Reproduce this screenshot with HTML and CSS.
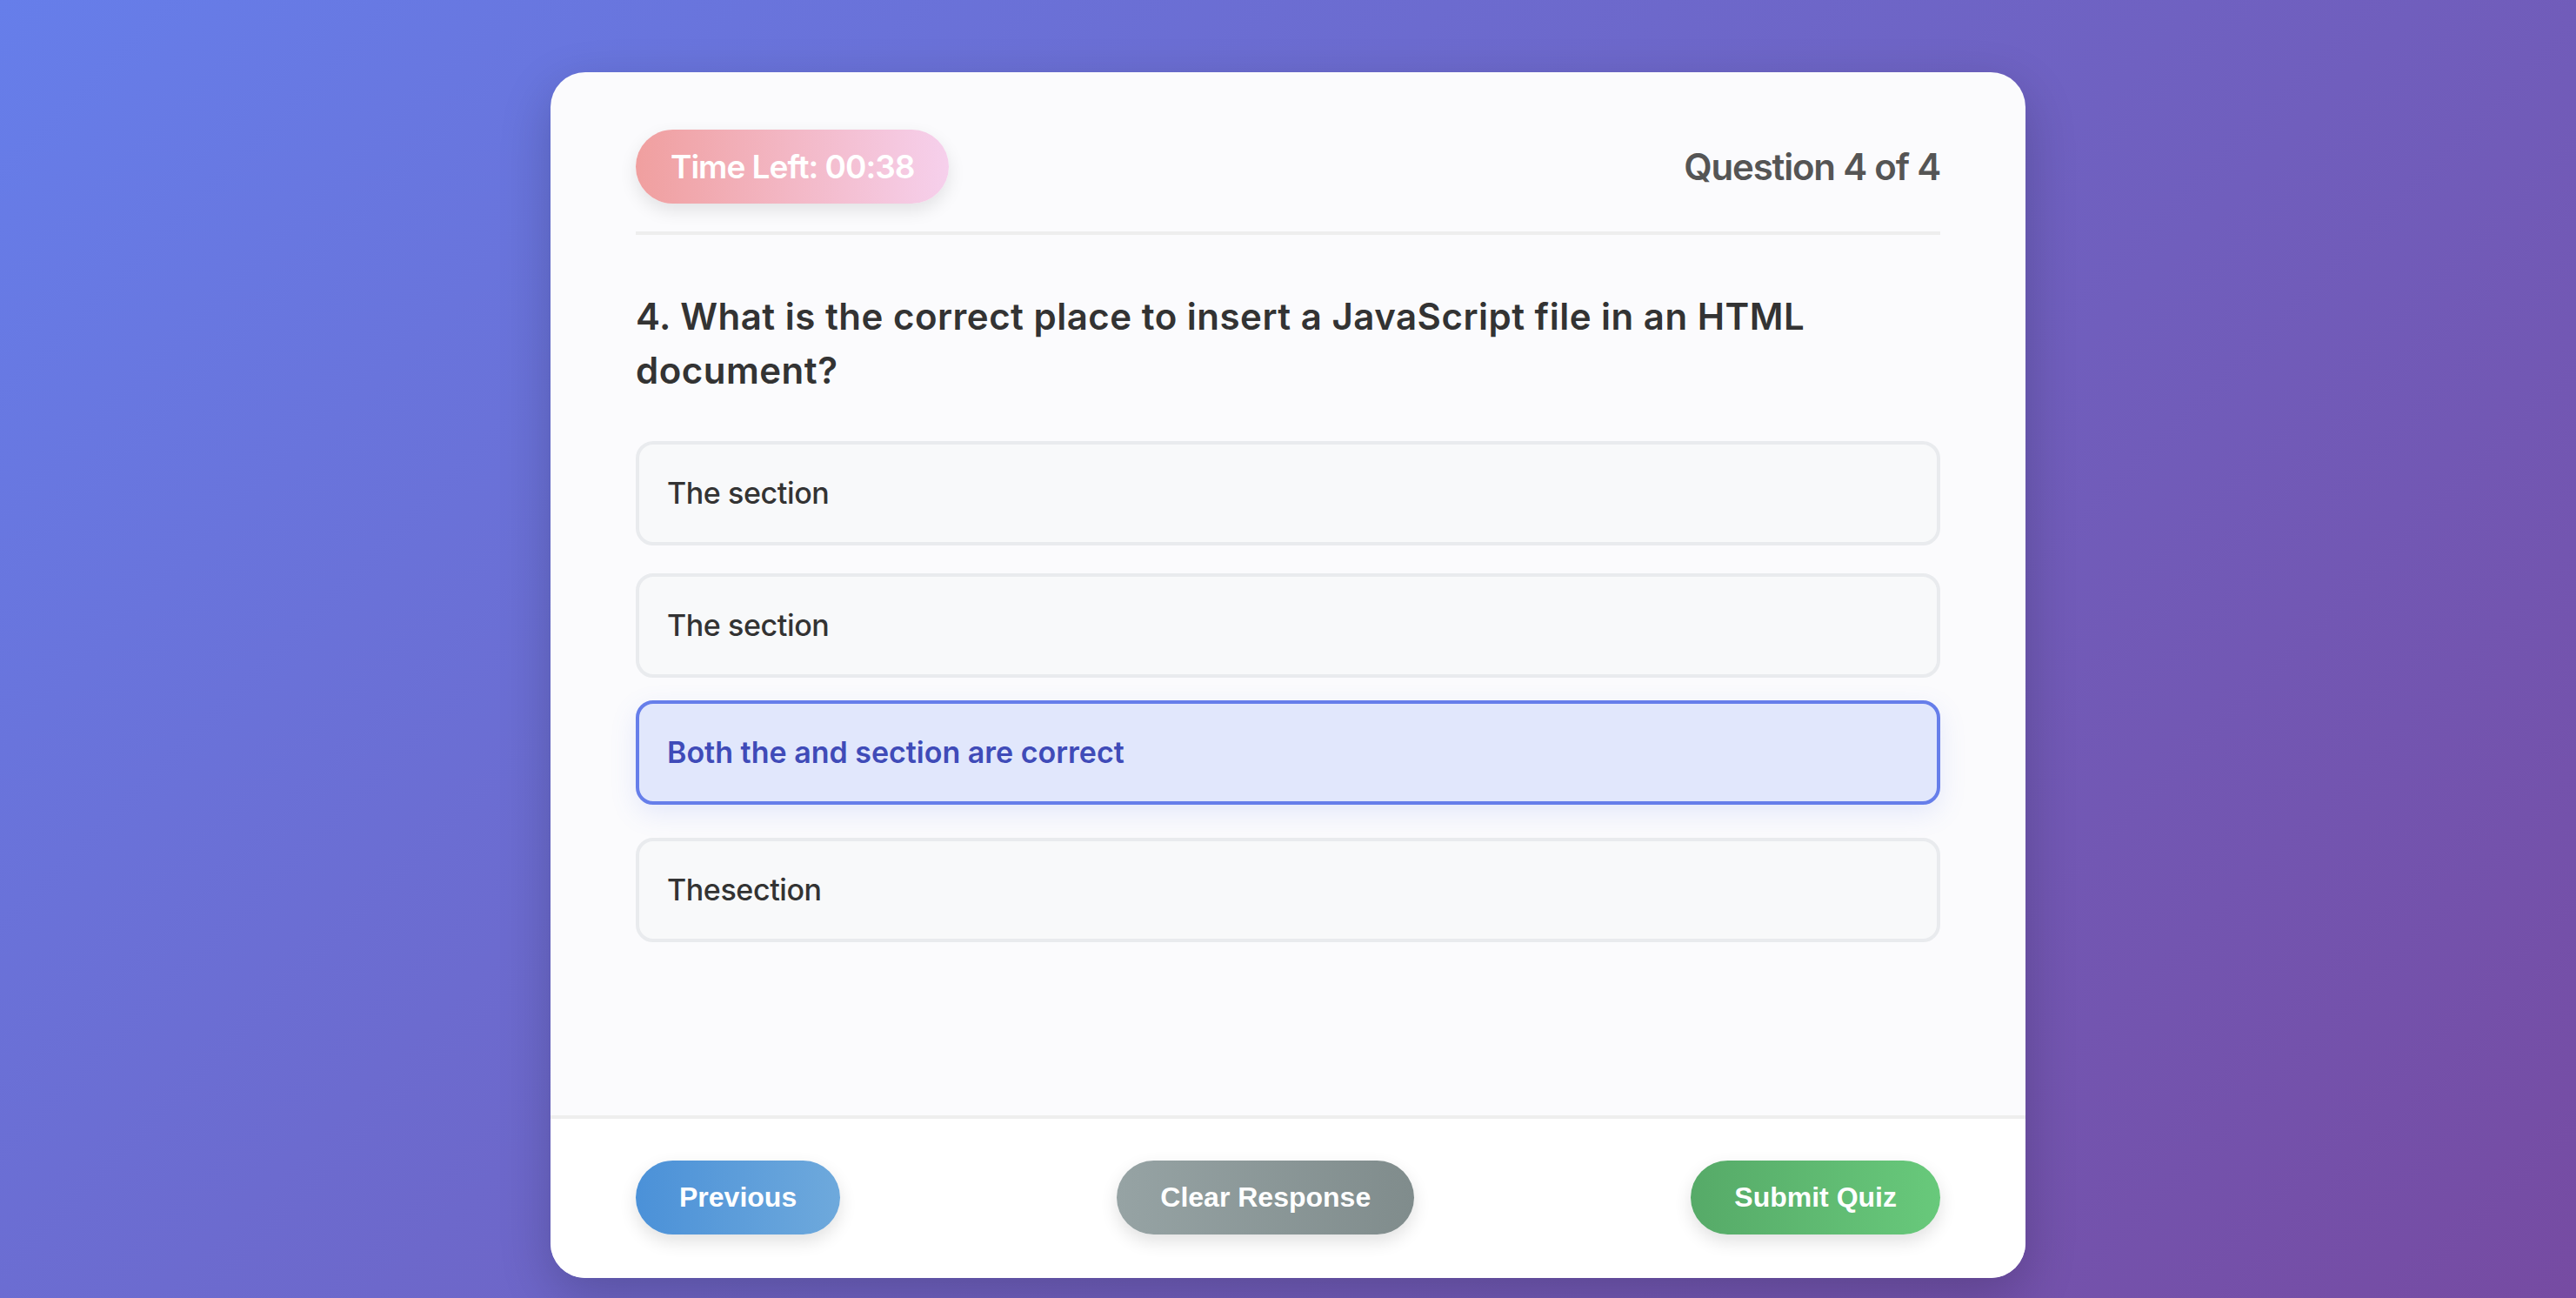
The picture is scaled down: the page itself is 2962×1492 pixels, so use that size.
FILE: index.html
```html
<!DOCTYPE html>
<html lang="en">
<head>
<meta charset="utf-8">
<title>Quiz</title>
<link rel="stylesheet" href="styles.css">
</head>
<body>
  <div class="card">
    <div class="card-body">
      <div class="header">
        <div class="timer">Time Left: 00:38</div>
        <div class="progress">Question 4 of 4</div>
      </div>
      <h2 class="question">4. What is the correct place to insert a JavaScript file in an HTML document?</h2>
      <div class="options">
        <div class="option">The section</div>
        <div class="option">The section</div>
        <div class="option selected">Both the and section are correct</div>
        <div class="option">Thesection</div>
      </div>
    </div>
    <div class="footer">
      <button class="btn btn-prev">Previous</button>
      <button class="btn btn-clear">Clear Response</button>
      <button class="btn btn-submit">Submit Quiz</button>
    </div>
  </div>
</body>
</html>
```

FILE: styles.css
```css
* { box-sizing: border-box; }

html, body {
  margin: 0;
  height: 100%;
}

body {
  background: linear-gradient(135deg, #667eea 0%, #764ba2 100%);
  font-family: "Inter", "Open Sans", sans-serif;
  padding-top: 83px;
  overflow: hidden;
}

.card {
  width: 1696px;
  height: 1386px;
  margin: 0 auto;
  background: #fbfbfd;
  border-radius: 40px;
  box-shadow: 0 20px 60px rgba(0, 0, 0, 0.2);
  display: flex;
  flex-direction: column;
  overflow: hidden;
}

.card-body {
  flex: 1;
  padding: 66px 98px 0;
}

.header {
  display: flex;
  justify-content: space-between;
  align-items: center;
  padding-bottom: 32px;
  border-bottom: 4px solid #eeeeee;
}

.timer {
  height: 85px;
  padding: 0 40px;
  display: flex;
  align-items: center;
  border-radius: 50px;
  background: linear-gradient(90deg, #f09f9f 0%, #f6d0ec 100%);
  color: #ffffff;
  font-size: 37px;
  letter-spacing: -1px;
  font-weight: 600;
  box-shadow: 0 8px 20px rgba(0, 0, 0, 0.1);
}

.progress {
  font-size: 42px;
  letter-spacing: -1.2px;
  font-weight: 600;
  color: #555555;
}

.question {
  margin: 63px 0 50px;
  font-size: 42px;
  line-height: 62px;
  letter-spacing: 0.5px;
  font-weight: 600;
  color: #333333;
}

.options {
  display: flex;
  flex-direction: column;
  gap: 32px;
}

.option {
  padding: 32px 32px;
  line-height: 48px;
  border: 4px solid #e9ebee;
  border-radius: 20px;
  background: #f8f9fa;
  font-size: 34px;
  letter-spacing: -0.4px;
  font-weight: 500;
  color: #333333;
}

.option.selected {
  border-color: #667eea;
  background: #e1e7fc;
  color: #3f4bb8;
  font-weight: 600;
  letter-spacing: 0;
  transform: translateY(-6px);
  box-shadow: 0 10px 30px rgba(102, 126, 234, 0.15);
}

.footer {
  display: flex;
  justify-content: space-between;
  align-items: center;
  padding: 48px 98px 50px;
  border-top: 4px solid #eeeeee;
  background: #ffffff;
}

.btn {
  height: 85px;
  padding: 0 50px;
  border: none;
  border-radius: 50px;
  color: #ffffff;
  font-family: "Liberation Sans", Arial, sans-serif;
  font-size: 32px;
  font-weight: 700;
  box-shadow: 0 8px 20px rgba(0, 0, 0, 0.12);
}

.btn-prev {
  background: linear-gradient(90deg, #4b91d8 0%, #6ea9dc 100%);
}

.btn-clear {
  background: linear-gradient(90deg, #96a3a4 0%, #808c8c 100%);
}

.btn-submit {
  background: linear-gradient(90deg, #56aa68 0%, #68c97b 100%);
}
```
